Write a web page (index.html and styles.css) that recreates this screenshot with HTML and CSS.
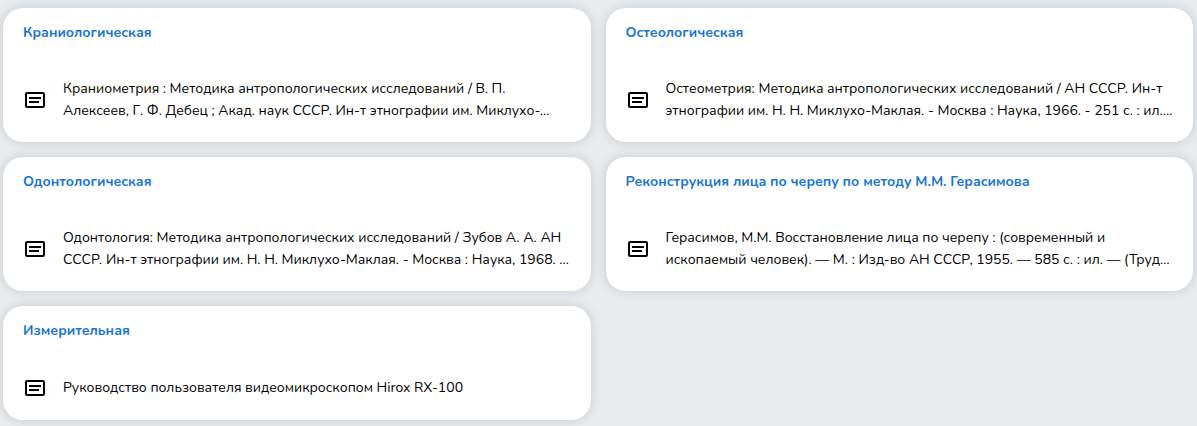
FILE: index.html
```
<!DOCTYPE html>
<html lang="ru">
<head>
	<meta charset="utf-8">
	<title>Методики</title>
	<link rel="stylesheet" href="styles.css">
</head>

<body>
	<main class="cards">
		<section class="card">
			<h2 class="card-title">Краниологическая</h2>
			<div class="card-row">
				<svg class="icon" viewBox="0 0 24 24" aria-hidden="true">
					<path fill-rule="evenodd" d="M4 4h16a2 2 0 0 1 2 2v12a2 2 0 0 1-2 2H4a2 2 0 0 1-2-2V6a2 2 0 0 1 2-2zm0 2v12h16V6zM6 9h12v2H6zM6 13h10v2H6z"/>
				</svg>
				<p class="text">Краниометрия : Методика антропологических исследований / В. П.<br>Алексеев, Г. Ф. Дебец ; Акад. наук СССР. Ин-т этнографии им. Миклухо-…</p>
			</div>
		</section>

		<section class="card">
			<h2 class="card-title">Остеологическая</h2>
			<div class="card-row">
				<svg class="icon" viewBox="0 0 24 24" aria-hidden="true">
					<path fill-rule="evenodd" d="M4 4h16a2 2 0 0 1 2 2v12a2 2 0 0 1-2 2H4a2 2 0 0 1-2-2V6a2 2 0 0 1 2-2zm0 2v12h16V6zM6 9h12v2H6zM6 13h10v2H6z"/>
				</svg>
				<p class="text">Остеометрия: Методика антропологических исследований / АН СССР. Ин-т<br>этнографии им. Н. Н. Миклухо-Маклая. - Москва : Наука, 1966. - 251 с. : ил.…</p>
			</div>
		</section>

		<section class="card">
			<h2 class="card-title">Одонтологическая</h2>
			<div class="card-row">
				<svg class="icon" viewBox="0 0 24 24" aria-hidden="true">
					<path fill-rule="evenodd" d="M4 4h16a2 2 0 0 1 2 2v12a2 2 0 0 1-2 2H4a2 2 0 0 1-2-2V6a2 2 0 0 1 2-2zm0 2v12h16V6zM6 9h12v2H6zM6 13h10v2H6z"/>
				</svg>
				<p class="text">Одонтология: Методика антропологических исследований / Зубов А. А. АН<br>СССР. Ин-т этнографии им. Н. Н. Миклухо-Маклая. - Москва : Наука, 1968. …</p>
			</div>
		</section>

		<section class="card">
			<h2 class="card-title">Реконструкция лица по черепу по методу М.М. Герасимова</h2>
			<div class="card-row">
				<svg class="icon" viewBox="0 0 24 24" aria-hidden="true">
					<path fill-rule="evenodd" d="M4 4h16a2 2 0 0 1 2 2v12a2 2 0 0 1-2 2H4a2 2 0 0 1-2-2V6a2 2 0 0 1 2-2zm0 2v12h16V6zM6 9h12v2H6zM6 13h10v2H6z"/>
				</svg>
				<p class="text">Герасимов, М.М. Восстановление лица по черепу : (современный и<br>ископаемый человек). — М. : Изд-во АН СССР, 1955. — 585 с. : ил. — (Труд…</p>
			</div>
		</section>

		<section class="card">
			<h2 class="card-title">Измерительная</h2>
			<div class="card-row">
				<svg class="icon" viewBox="0 0 24 24" aria-hidden="true">
					<path fill-rule="evenodd" d="M4 4h16a2 2 0 0 1 2 2v12a2 2 0 0 1-2 2H4a2 2 0 0 1-2-2V6a2 2 0 0 1 2-2zm0 2v12h16V6zM6 9h12v2H6zM6 13h10v2H6z"/>
				</svg>
				<p class="text">Руководство пользователя видеомикроскопом Hirox RX-100</p>
			</div>
		</section>
	</main>
</body>
</html>
```
FILE: styles.css
```
*{
	margin: 0px;
	padding: 0px;
	box-sizing: border-box;
}
body{
	background-color: #e9ecef;
	font-family: Nunito, Lato, "Open Sans", sans-serif;
	font-size: 14px;
	color: #000;
}
.cards{
	display: grid;
	grid-template-columns: 1fr 1fr;
	gap: 15px;
	align-items: start;
	padding: 8px 4px 6px 3px;
}
.card{
	background-color: #fff;
	border-radius: 20px;
	box-shadow: 0px 0px 12px rgba(0,0,0,0.15);
	padding: 15px 20px 20px 20px;
	min-width: 0px;
}
.card-title{
	color: #1976d2;
	font-size: 14px;
	font-weight: 700;
	line-height: 20px;
	margin-bottom: 35px;
}
.card-row{
	display: flex;
	align-items: center;
	gap: 16px;
}
.icon{
	width: 24px;
	height: 24px;
	flex: none;
}
.text{
	line-height: 22px;
}
```
